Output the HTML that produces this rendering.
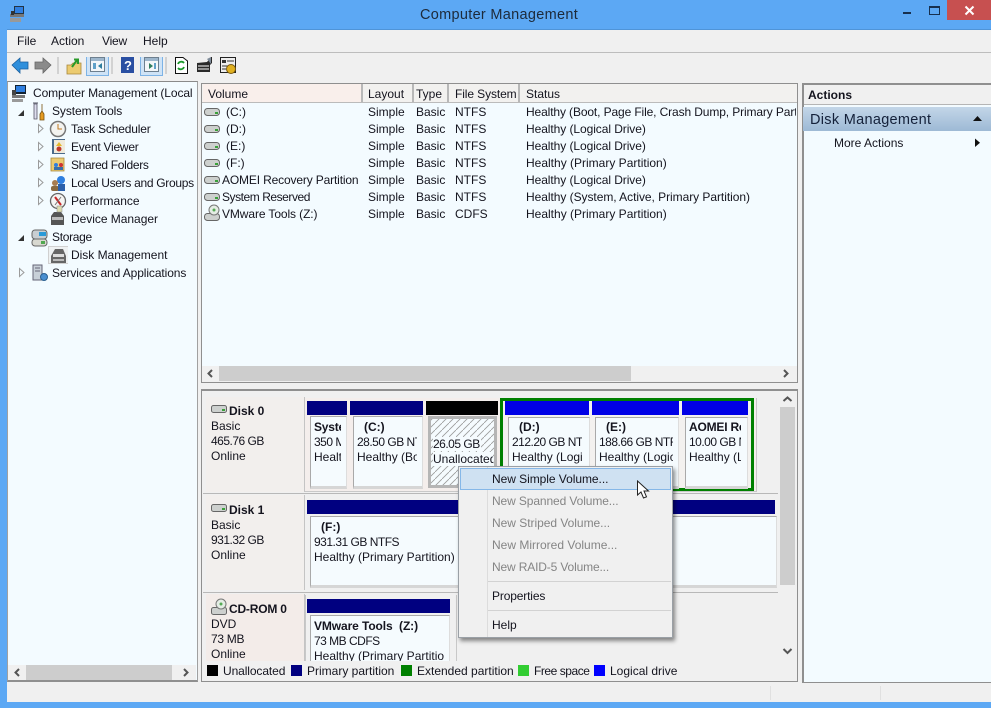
<!DOCTYPE html>
<html><head><meta charset="utf-8"><style>
html,body{margin:0;padding:0;width:991px;height:708px;overflow:hidden;background:#5ca8f4}
body{position:relative;font:12px "Liberation Sans",sans-serif;color:#14141e}
div,svg{position:absolute}
.t{position:absolute;white-space:nowrap;line-height:14px;height:14px;letter-spacing:0}
.g{color:#858585}
.b{font-weight:bold}
.d{letter-spacing:-.5px}
.l{letter-spacing:-.07px}
.bar{height:14px}
.box{background:#f5fbfe;border:1px solid #a9a9a9;border-right-color:#ddd;border-bottom:3px solid #d6d6d6;overflow:hidden}
.box .t{left:3px;overflow:hidden}
.sep{width:2px;background:#b8b8b8}
</style></head><body>
<!-- window chrome -->
<div style="left:7px;top:30px;width:984px;height:672px;background:#f0f0f0;box-shadow:0 -1px 0 #4f94d8"></div>
<div class="t" style="left:420px;top:7px;font-size:14.5px;line-height:16px;height:16px;color:#1d2a3a;letter-spacing:.3px">Computer Management</div>
<svg style="left:9px;top:5px" width="17" height="18" viewBox="0 0 17 18"><rect x="5" y="1" width="10" height="9" fill="#234"/><rect x="6" y="2" width="8" height="6" fill="#2f7fe0"/><rect x="1" y="9" width="14" height="3" fill="#777"/><rect x="1" y="13" width="11" height="4" fill="#999"/><rect x="2" y="6" width="3" height="4" fill="#333"/></svg>
<div style="left:929px;top:6px;width:9px;height:6px;border:1px solid #17304f;border-top-width:2px"></div>
<div style="left:903px;top:12px;width:8px;height:2px;background:#17304f"></div>
<div style="left:947px;top:0;width:44px;height:20px;background:#c75050"></div>
<svg style="left:964px;top:5px" width="11" height="11"><path d="M1.5 1.5L9.5 9.5M9.5 1.5L1.5 9.5" stroke="#fff" stroke-width="2"/></svg>
<!-- menu -->
<div style="left:7px;top:52px;width:984px;height:1px;background:#bdbdbd"></div>
<div class="t" style="left:17px;top:34px">File</div>
<div class="t" style="left:51px;top:34px">Action</div>
<div class="t" style="left:102px;top:34px;letter-spacing:-.2px">View</div>
<div class="t" style="left:143px;top:34px">Help</div>
<!-- toolbar -->
<svg style="left:11px;top:57px" width="230" height="20" viewBox="0 0 230 20">
<path d="M1 8L9 1V5H17V12H9V16Z" fill="#2f8fdc" stroke="#1a5f9e" stroke-width=".8"/>
<path d="M40 8L32 1V5H24V12H32V16Z" fill="#8a8a8a" stroke="#666" stroke-width=".8"/>
<rect x="46.5" y="0" width="1" height="17" fill="#b5b5b5"/>
<path d="M56 8H60L62 6H70V17H56Z" fill="#eccb70" stroke="#a8873a" stroke-width=".8"/><path d="M61 10L66 3M63 2.500H67V7" stroke="#2a9a2a" stroke-width="2" fill="none"/>
<rect x="75.500" y="-3.500" width="22" height="22" fill="#cfe3f6" stroke="#7db3e6"/>
<rect x="79.500" y="0.500" width="14" height="14" fill="#f3f6f9" stroke="#6d7f8f"/><rect x="80" y="1" width="13" height="3" fill="#9db6cc"/><rect x="82" y="6" width="3" height="6" fill="#60a0c8"/><path d="M91 6V12L87 9Z" fill="#2e7d9e"/>
<rect x="100.500" y="0" width="1" height="17" fill="#b5b5b5"/>
<rect x="110" y="0" width="13" height="16" fill="#2a4fa2"/><text x="113" y="13" font-size="13" font-weight="bold" fill="#fff" font-family="Liberation Sans">?</text>
<rect x="129.500" y="-3.500" width="22" height="22" fill="#cfe3f6" stroke="#7db3e6"/>
<rect x="133.500" y="0.500" width="14" height="14" fill="#f3f6f9" stroke="#6d7f8f"/><rect x="134" y="1" width="13" height="3" fill="#9db6cc"/><path d="M138 6V12L142 9Z" fill="#2e7d5e"/><rect x="143" y="6" width="2" height="6" fill="#60a0c8"/>
<rect x="154.500" y="0" width="1" height="17" fill="#b5b5b5"/>
<path d="M164.500.5H172L176.500 4V16.500H164.500Z" fill="#fff" stroke="#111"/><path d="M167 7A3.500 3.500 0 0 1 173 6M173 10A3.500 3.500 0 0 1 167 11" stroke="#1c9a2c" stroke-width="1.800" fill="none"/>
<path d="M186 6L196 5L200 0H201V6L199 8V15H186Z" fill="#2a2a2a"/><path d="M187 9H198M187 12H198" stroke="#fff"/><path d="M196 2L200 0V7Z" fill="#7d8a99"/>
<rect x="209.500" y="0.500" width="15" height="15" fill="#eee" stroke="#222"/><rect x="211" y="3" width="4" height="3" fill="#333"/><path d="M216 4H223M211 9H217M211 12H215" stroke="#333"/><circle cx="220" cy="12" r="4.500" fill="#e0b020" stroke="#7a5a10"/>
</svg>
<!-- tree pane -->
<div style="left:7px;top:81px;height:601px;background:#f3fbff;border:1px solid #a0a0a0;border-top-color:#8a8a8a;border-bottom:2px solid #8f8f8f;box-sizing:border-box;width:191px"></div>
<svg style="left:8px;top:84px" width="60" height="200" viewBox="0 0 60 200">
<!-- computer -->
<rect x="7" y="1" width="11" height="9" fill="#123"/><rect x="8" y="2" width="9" height="6" fill="#2f7fe0"/><rect x="4" y="11" width="13" height="3" fill="#777"/><rect x="4" y="15" width="11" height="3" fill="#9a9a9a"/><rect x="4" y="6" width="4" height="5" fill="#444"/>
<!-- tools -->
<path d="M26 20H29V35H26Z" fill="#dde" stroke="#556" stroke-width=".8"/><path d="M34 20V27L36 30V36H32V30L34 27" fill="#e59b22" stroke="#7a5210" stroke-width=".8"/><path d="M25 19L30 19" stroke="#556"/>
<path d="M16 26V32H10Z" fill="#333"/>
<!-- clock -->
<circle cx="50" cy="45" r="7.500" fill="#f3f3f0" stroke="#777" stroke-width="1.500"/><path d="M50 40V45H54" stroke="#c07a20" fill="none"/>
<!-- event viewer -->
<rect x="44" y="55" width="13" height="15" fill="#4a6a8a"/><rect x="46" y="56" width="11" height="13" fill="#efeadb"/><path d="M51 58L54 62H48Z" fill="#e5b82a"/><circle cx="51" cy="65" r="2.500" fill="#c0392b"/>
<!-- shared -->
<path d="M43 74H56V87H43Z" fill="#eccb70" stroke="#a8873a" stroke-width=".8"/><circle cx="48" cy="81" r="2" fill="#2f7fe0"/><circle cx="53" cy="81" r="2" fill="#c33"/><rect x="46" y="83" width="9" height="3" fill="#3a6fa8"/>
<!-- users -->
<circle cx="53" cy="96" r="4" fill="#2f7fe0"/><circle cx="47" cy="99" r="3" fill="#a87d50"/><rect x="43" y="102" width="8" height="5" fill="#8a6a40" rx="2"/><rect x="50" y="100" width="7" height="7" fill="#2a5faa"/>
<!-- performance -->
<circle cx="50" cy="117" r="7.500" fill="#f4f4f2" stroke="#666" stroke-width="1.300"/><path d="M47 113L53 121" stroke="#c62828" stroke-width="2"/><path d="M53 113L47 121" stroke="#777"/>
<!-- device mgr -->
<path d="M43 132L46 128H53L56 132V141H43Z" fill="#555"/><rect x="44" y="133" width="11" height="3" fill="#bbb"/><rect x="49" y="122" width="5" height="6" fill="#dcdcb0" stroke="#888" stroke-width=".5"/>
<!-- storage -->
<rect x="24" y="146" width="15" height="9" rx="3" fill="#c8ced2" stroke="#666"/><rect x="31" y="148" width="7" height="4" fill="#2a9ad8"/><rect x="24" y="155" width="15" height="7" rx="3" fill="#d8d8d0" stroke="#666"/><rect x="33" y="157" width="4" height="3" fill="#50a850"/>
<!-- disk mgmt sel -->
<rect x="40.500" y="162.500" width="122" height="17" fill="#eef1f2" stroke="#d0d0d0"/>
<path d="M43 172L47 165H55L58 172V179H43Z" fill="#666"/><rect x="45" y="170" width="11" height="3" fill="#ddd"/><rect x="45" y="175" width="11" height="2" fill="#bbb"/>
<!-- services -->
<rect x="25" y="181" width="9" height="15" fill="#c8d0d8" stroke="#667"/><path d="M27 184H32M27 187H32" stroke="#667"/><circle cx="36" cy="193" r="3.500" fill="#4a8fd0" stroke="#2a5f90"/>
<!-- arrows -->
<g fill="none" stroke="#9b9b9b">
<path d="M30.500 40.500V48.500L35 44.500Z"/><path d="M30.500 58.500V66.500L35 62.500Z"/><path d="M30.500 76.500V84.500L35 80.500Z"/><path d="M30.500 94.500V102.500L35 98.500Z"/><path d="M30.500 112.500V120.500L35 116.500Z"/>
<path d="M11.500 184.500V192.500L16 188.500Z"/></g>
<path d="M16 151V157H10Z" fill="#333"/>
</svg>
<div class="t" style="left:33px;top:86px;letter-spacing:-.1px;width:163px;overflow:hidden">Computer Management (Local</div>
<div class="t" style="left:52px;top:104px;letter-spacing:-.08px">System Tools</div>
<div class="t" style="left:71px;top:122px;letter-spacing:-.18px">Task Scheduler</div>
<div class="t" style="left:71px;top:140px;letter-spacing:-.25px">Event Viewer</div>
<div class="t" style="left:71px;top:158px;letter-spacing:-.32px">Shared Folders</div>
<div class="t" style="left:71px;top:176px;letter-spacing:-.3px">Local Users and Groups</div>
<div class="t" style="left:71px;top:194px;letter-spacing:-.02px">Performance</div>
<div class="t" style="left:71px;top:212px;letter-spacing:-.03px">Device Manager</div>
<div class="t" style="left:52px;top:230px;letter-spacing:-.3px">Storage</div>
<div class="t" style="left:71px;top:248px;letter-spacing:-.02px">Disk Management</div>
<div class="t" style="left:52px;top:266px;letter-spacing:-.1px">Services and Applications</div>
<!-- tree scrollbar -->
<div style="left:8px;top:665px;width:188px;height:15px;background:#f0f0f0"></div>
<div style="left:26px;top:665px;width:146px;height:15px;background:#cdcdcd"></div>
<svg style="left:14px;top:668px" width="180" height="10"><path d="M5 1L1.500 4.500L5 8" stroke="#555" stroke-width="2" fill="none"/><path d="M170 1L173.500 4.500L170 8" stroke="#555" stroke-width="2" fill="none"/></svg>
<!-- volume list -->
<div style="left:201px;top:83px;width:597px;height:300px;background:#f3fbff;border:1px solid #8f8f8f;box-sizing:border-box"></div>
<div style="left:202px;top:84px;width:595px;height:18px;background:#f2f1ef;border-bottom:1px solid #bbb"></div>
<div style="left:203px;top:84px;width:158px;height:18px;background:#f9efeb"></div>
<div class="sep" style="left:361px;top:84px;height:18px"></div>
<div class="sep" style="left:412px;top:84px;height:18px"></div>
<div class="sep" style="left:447px;top:84px;height:18px"></div>
<div class="sep" style="left:518px;top:84px;height:18px"></div>
<div class="t" style="left:208px;top:87px">Volume</div><div class="t" style="left:368px;top:87px">Layout</div><div class="t" style="left:416px;top:87px">Type</div><div class="t" style="left:455px;top:87px;letter-spacing:-.1px">File System</div><div class="t" style="left:526px;top:87px">Status</div>
<svg style="left:204px;top:106px" width="18" height="120" viewBox="0 0 18 120">
<g id="dk"><rect x=".5" y="2.500" width="15" height="7" rx="3" fill="#cdd0ce" stroke="#666"/><rect x="11" y="6" width="3" height="2" fill="#3aa03a"/></g>
<use href="#dk" y="17"/><use href="#dk" y="34"/><use href="#dk" y="51"/><use href="#dk" y="68"/><use href="#dk" y="85"/>
<rect x=".5" y="107.500" width="15" height="7" rx="3" fill="#cdd0ce" stroke="#666"/><circle cx="10" cy="104" r="5" fill="#e4ece4" stroke="#777"/><circle cx="10" cy="104" r="1.500" fill="#5a5"/>
</svg>
<div class="t" style="left:226px;top:105px">(C:)</div><div class="t" style="left:226px;top:122px">(D:)</div><div class="t" style="left:226px;top:139px">(E:)</div><div class="t" style="left:226px;top:156px">(F:)</div><div class="t" style="left:222px;top:173px;letter-spacing:-.15px">AOMEI Recovery Partition</div><div class="t" style="left:222px;top:190px;letter-spacing:-.45px">System Reserved</div><div class="t" style="left:222px;top:207px;letter-spacing:-.1px">VMware Tools (Z:)</div>
<div class="t" style="left:368px;top:105px">Simple</div><div class="t" style="left:368px;top:122px">Simple</div><div class="t" style="left:368px;top:139px">Simple</div><div class="t" style="left:368px;top:156px">Simple</div><div class="t" style="left:368px;top:173px">Simple</div><div class="t" style="left:368px;top:190px">Simple</div><div class="t" style="left:368px;top:207px">Simple</div>
<div class="t" style="left:416px;top:105px">Basic</div><div class="t" style="left:416px;top:122px">Basic</div><div class="t" style="left:416px;top:139px">Basic</div><div class="t" style="left:416px;top:156px">Basic</div><div class="t" style="left:416px;top:173px">Basic</div><div class="t" style="left:416px;top:190px">Basic</div><div class="t" style="left:416px;top:207px">Basic</div>
<div class="t" style="left:455px;top:105px">NTFS</div><div class="t" style="left:455px;top:122px">NTFS</div><div class="t" style="left:455px;top:139px">NTFS</div><div class="t" style="left:455px;top:156px">NTFS</div><div class="t" style="left:455px;top:173px">NTFS</div><div class="t" style="left:455px;top:190px">NTFS</div><div class="t" style="left:455px;top:207px">CDFS</div>
<div class="t" style="left:526px;top:105px;width:270px;overflow:hidden;letter-spacing:-.12px">Healthy (Boot, Page File, Crash Dump, Primary Partition)</div>
<div class="t l" style="left:526px;top:122px">Healthy (Logical Drive)</div><div class="t l" style="left:526px;top:139px">Healthy (Logical Drive)</div><div class="t" style="left:526px;top:156px">Healthy (Primary Partition)</div><div class="t l" style="left:526px;top:173px">Healthy (Logical Drive)</div><div class="t" style="left:526px;top:190px;letter-spacing:-.05px">Healthy (System, Active, Primary Partition)</div><div class="t" style="left:526px;top:207px">Healthy (Primary Partition)</div>
<!-- list h-scroll -->
<div style="left:202px;top:366px;width:595px;height:16px;background:#f0f0f0"></div>
<div style="left:219px;top:366px;width:412px;height:15px;background:#cdcdcd"></div>
<svg style="left:207px;top:369px" width="588" height="10"><path d="M5 1L1.500 4.500L5 8" stroke="#555" stroke-width="2" fill="none"/><path d="M577 1L580.500 4.500L577 8" stroke="#555" stroke-width="2" fill="none"/></svg>
<!-- graphical pane -->
<div style="left:201px;top:389px;width:597px;height:293px;background:#f0f0f0;border:1px solid #8f8f8f;border-top:2px solid #8f8f8f;box-sizing:border-box"></div>
<!-- disk labels -->
<div style="left:206px;top:397px;width:98px;height:95px;background:#f2efed;border-right:1px solid #c4c4c4"></div>
<div style="left:203px;top:493px;width:575px;height:1px;background:#b8b8b8"></div>
<div style="left:206px;top:495px;width:98px;height:95px;background:#f2efed;border-right:1px solid #c4c4c4"></div>
<div style="left:203px;top:592px;width:575px;height:1px;background:#b8b8b8"></div>
<div style="left:206px;top:594px;width:98px;height:68px;background:#f3ece9;border-right:1px solid #c4c4c4"></div>
<svg style="left:211px;top:402px" width="18" height="220" viewBox="0 0 18 220"><rect x=".5" y="3.500" width="15" height="7" rx="2" fill="#cdd0ce" stroke="#666"/><rect x="11" y="7" width="3" height="2" fill="#3aa03a"/><rect x=".5" y="102.500" width="15" height="7" rx="2" fill="#cdd0ce" stroke="#666"/><rect x="11" y="106" width="3" height="2" fill="#3aa03a"/><rect x=".5" y="205.500" width="15" height="7" rx="2" fill="#cdd0ce" stroke="#666"/><circle cx="10" cy="202" r="5" fill="#e4ece4" stroke="#777"/><circle cx="10" cy="202" r="1.500" fill="#5a5"/></svg>
<div class="t b" style="left:229px;top:404px">Disk 0</div><div class="t" style="left:211px;top:419px">Basic</div><div class="t d" style="left:211px;top:434px">465.76 GB</div><div class="t" style="left:211px;top:449px">Online</div>
<div class="t b" style="left:229px;top:503px">Disk 1</div><div class="t" style="left:211px;top:518px">Basic</div><div class="t d" style="left:211px;top:533px">931.32 GB</div><div class="t" style="left:211px;top:548px">Online</div>
<div class="t b" style="left:229px;top:602px;letter-spacing:-.2px">CD-ROM 0</div><div class="t" style="left:211px;top:617px">DVD</div><div class="t" style="left:211px;top:632px;letter-spacing:-.3px">73 MB</div><div class="t" style="left:211px;top:647px">Online</div>
<!-- disk0 parts -->
<div style="left:305px;top:398px;width:452px;height:94px;background:#f4eeec;border-right:1px solid #c8c8c8;border-bottom:1px solid #c8c8c8;box-sizing:border-box"></div>
<div class="bar" style="left:307px;top:401px;width:40px;background:#000080"></div>
<div class="bar" style="left:350px;top:401px;width:73px;background:#000080"></div>
<div class="bar" style="left:426px;top:401px;width:72px;background:#000"></div>
<div class="box" style="left:310px;top:416px;width:35px;height:69px"><div class="t b" style="top:3px;width:27px;letter-spacing:-.2px">Syste</div><div class="t d" style="top:18px;width:27px">350 MB</div><div class="t" style="top:33px;width:27px">Healthy</div></div>
<div class="box" style="left:353px;top:416px;width:68px;height:69px"><div class="t b" style="left:10px;top:3px">(C:)</div><div class="t d" style="top:18px;width:60px">28.50 GB NTFS</div><div class="t" style="top:33px;width:60px">Healthy (Boot</div></div>
<svg style="left:428px;top:416px" width="69" height="72"><defs><pattern id="h" width="7" height="7" patternUnits="userSpaceOnUse"><path d="M-1 8L8 -1" stroke="#9a9a9a" stroke-width=".8"/></pattern></defs><rect width="69" height="72" fill="#f5fbfe"/><rect width="69" height="72" fill="url(#h)"/><rect x="1.500" y="1.500" width="66" height="69" fill="none" stroke="#b5b5b5" stroke-width="3"/></svg>
<div class="t d" style="left:433px;top:437px;background:#f5fbfe;padding-right:1px">26.05 GB</div><div class="t" style="left:433px;top:452px;width:60px;overflow:hidden;background:#f5fbfe">Unallocated</div>
<div style="left:500px;top:398px;width:254px;height:93px;border:3px solid #008000;box-sizing:border-box;background:#f3f1ef"></div>
<div class="bar" style="left:505px;top:401px;width:84px;background:#0000e6"></div>
<div class="bar" style="left:592px;top:401px;width:87px;background:#0000e6"></div>
<div class="bar" style="left:682px;top:401px;width:66px;background:#0000e6"></div>
<div class="box" style="left:508px;top:417px;width:80px;height:68px"><div class="t b" style="left:10px;top:2px">(D:)</div><div class="t d" style="top:17px;width:70px">212.20 GB NTFS</div><div class="t" style="top:32px;width:70px">Healthy (Logical</div></div>
<div class="box" style="left:595px;top:417px;width:82px;height:68px"><div class="t b" style="left:10px;top:2px">(E:)</div><div class="t d" style="top:17px;width:74px">188.66 GB NTFS</div><div class="t" style="top:32px;width:74px">Healthy (Logical</div></div>
<div class="box" style="left:685px;top:417px;width:61px;height:68px"><div class="t b" style="top:2px;width:52px;letter-spacing:-.2px">AOMEI Re</div><div class="t d" style="top:17px;width:52px">10.00 GB NTFS</div><div class="t" style="top:32px;width:52px">Healthy (Logical</div></div>
<!-- disk1 -->
<div class="bar" style="left:307px;top:500px;width:468px;background:#000080"></div>
<div class="box" style="left:310px;top:516px;width:465px;height:68px"><div class="t b" style="left:10px;top:3px">(F:)</div><div class="t d" style="top:18px">931.31 GB NTFS</div><div class="t" style="top:33px;letter-spacing:0">Healthy (Primary Partition)</div></div>
<!-- cd -->
<div style="left:305px;top:595px;width:150px;height:67px;border-right:1px solid #c8c8c8;border-left:1px solid #c8c8c8"></div>
<div class="bar" style="left:307px;top:599px;width:143px;background:#000080"></div>
<div class="box" style="left:310px;top:615px;width:138px;height:46px;border-bottom:0"><div class="t b" style="top:3px;left:3px;letter-spacing:-.1px">VMware Tools&nbsp; (Z:)</div><div class="t d" style="top:18px">73 MB CDFS</div><div class="t" style="top:33px;width:130px">Healthy (Primary Partition)</div></div>
<!-- v-scroll -->
<div style="left:780px;top:391px;width:16px;height:270px;background:#f0f0f0"></div>
<div style="left:780px;top:407px;width:15px;height:178px;background:#cdcdcd"></div>
<svg style="left:782px;top:395px" width="12" height="262"><path d="M1.500 6L5.500 2.500L9.500 6" stroke="#555" stroke-width="2" fill="none"/><path d="M1.500 254L5.500 258L9.500 254" stroke="#555" stroke-width="2" fill="none"/></svg>
<!-- legend -->
<div style="left:202px;top:661px;width:595px;height:19px;background:#f0f0f0"></div>
<div style="left:207px;top:665px;width:11px;height:11px;background:#000"></div><div class="t" style="left:223px;top:664px;letter-spacing:-.1px">Unallocated</div>
<div style="left:291px;top:665px;width:11px;height:11px;background:#000080"></div><div class="t" style="left:307px;top:664px">Primary partition</div>
<div style="left:401px;top:665px;width:11px;height:11px;background:#008000"></div><div class="t" style="left:417px;top:664px">Extended partition</div>
<div style="left:518px;top:665px;width:11px;height:11px;background:#32cd32"></div><div class="t" style="left:534px;top:664px;letter-spacing:-.45px">Free space</div>
<div style="left:594px;top:665px;width:11px;height:11px;background:#0000ff"></div><div class="t" style="left:610px;top:664px">Logical drive</div>
<!-- actions -->
<div style="left:802px;top:83px;width:190px;height:600px;background:#f3fbff;border:1px solid #8f8f8f;border-right:0;box-sizing:border-box;border-left-width:2px;border-top-width:2px"></div>
<div style="left:804px;top:85px;width:187px;height:19px;background:#f0f0f0;border-bottom:1px solid #b5b5b5"></div>
<div class="t b" style="left:808px;top:88px">Actions</div>
<div style="left:803px;top:107px;width:188px;height:24px;background:linear-gradient(#c3d6e8,#9db9d5)"></div>
<div class="t" style="left:810px;top:112px;font-size:14.500px;line-height:17px;height:17px;letter-spacing:.3px;color:#14213a">Disk Management</div>
<svg style="left:972px;top:115px" width="12" height="8"><path d="M1 6H10L5.500 1Z" fill="#111"/></svg>
<div class="t" style="left:834px;top:136px">More Actions</div>
<svg style="left:974px;top:138px" width="8" height="10"><path d="M1 .5V9L6 4.700Z" fill="#111"/></svg>
<!-- status bar -->
<div style="left:7px;top:683px;width:984px;height:19px;background:#f0f0f0"></div>
<div style="left:770px;top:686px;width:1px;height:14px;background:#e0e0e0"></div><div style="left:880px;top:686px;width:1px;height:14px;background:#e0e0e0"></div>
<!-- context menu -->
<div style="left:458px;top:466px;width:215px;height:172px;background:#f0f0f0;border:1px solid #9aa0a6;box-sizing:border-box;box-shadow:2px 3px 4px rgba(0,0,0,.45)"></div>
<div style="left:487px;top:467px;width:1px;height:170px;background:#dcdcdc"></div>
<div style="left:460px;top:468px;width:211px;height:22px;background:#cfe1f2;border:1px solid #85b7e8;box-sizing:border-box"></div>
<div style="left:488px;top:581px;width:183px;height:1px;background:#d2d2d2"></div>
<div style="left:488px;top:610px;width:183px;height:1px;background:#d2d2d2"></div>
<div class="t" style="left:492px;top:472px;letter-spacing:-.05px">New Simple Volume...</div>
<div class="t g" style="left:492px;top:494px;letter-spacing:-.11px">New Spanned Volume...</div>
<div class="t g" style="left:492px;top:516px;letter-spacing:-.03px">New Striped Volume...</div>
<div class="t g" style="left:492px;top:538px">New Mirrored Volume...</div>
<div class="t g" style="left:492px;top:560px;letter-spacing:-.15px">New RAID-5 Volume...</div>
<div class="t" style="left:492px;top:589px;letter-spacing:-.15px">Properties</div>
<div class="t" style="left:492px;top:618px">Help</div>
<svg style="left:636px;top:480px" width="16" height="20"><path d="M1.500 1V15L5 12L7.500 18L10.500 16.800L8 11H12.500Z" fill="#fff" stroke="#222"/></svg>
</body></html>
